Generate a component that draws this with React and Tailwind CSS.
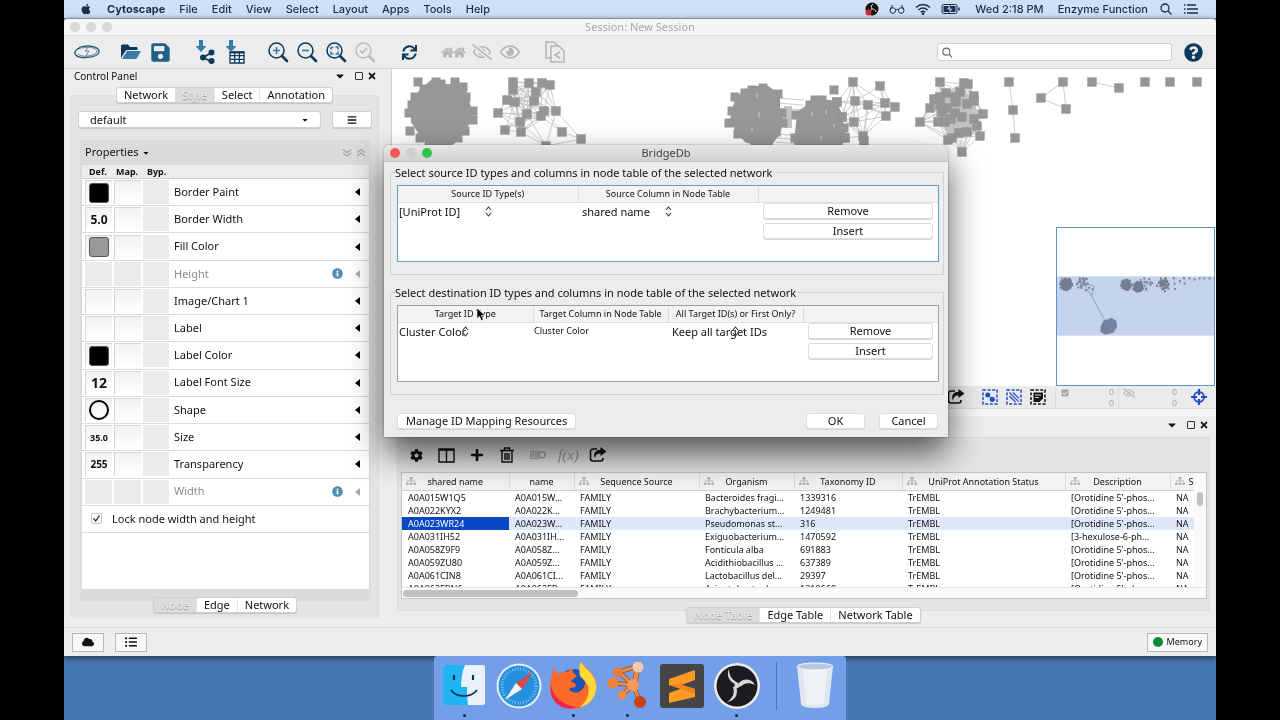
import React from "react";
import {
  FaApple, FaBars, FaCaretDown, FaCheckSquare, FaCloud, FaCog, FaFolderOpen, FaHome, FaInfoCircle, FaListUl,
  FaPlus, FaQuestionCircle, FaRegEye, FaRegEyeSlash, FaSave, FaSitemap, FaSync, FaTimes,
} from "react-icons/fa";

const NAVY = "#0b3a5c";
const BLUE = "#3a7ca5";

/* ---------- network data ---------- */

const blobs = [
  "M422 88 L431 80 L447 84 L461 84 L468 94 L471 108 L471 120 L464 134 L455 143 L446 150 L430 146 L420 136 L411 122 L411 108 L416 94 Z",
  "M737 96 L752 86 L768 86 L780 94 L780 108 L784 120 L780 134 L768 150 L745 142 L735 130 L730 120 L733 106 Z",
  "M797 112 L808 104 L815 98 L836 101 L842 114 L846 138 L838 152 L812 158 L794 144 Z",
];

const denseNodes = [
  [418, 82], [436, 82], [441, 84], [455, 82], [463, 87], [466, 97], [473, 111], [473, 120], [465, 131], [458, 138],
  [429, 142], [420, 138], [410, 131], [409, 113], [412, 105], [415, 97], [424, 89],
  [763, 88], [752, 90], [745, 93], [778, 94], [735, 97], [739, 102], [732, 111], [729, 123], [738, 134], [750, 138],
  [755, 141], [768, 141], [783, 123], [782, 113], [776, 132],
  [834, 90], [815, 100], [822, 100], [837, 102], [796, 115], [795, 138], [845, 138], [842, 117], [810, 105], [844, 128],
  [838, 142], [808, 140], [828, 141], [804, 116], [812, 128],
];

const webA = [
  [513, 82], [513, 90], [529, 83], [542, 83], [550, 85], [536, 92], [534, 101], [507, 100], [515, 102], [498, 113],
  [527, 114], [544, 111], [556, 111], [541, 116], [520, 122], [505, 130], [521, 132], [562, 132], [581, 139], [546, 146],
];
const webB = [
  [853, 82], [880, 86], [855, 101], [868, 105], [885, 103], [895, 107], [886, 116], [854, 122], [863, 136], [864, 141],
  [842, 117], [845, 138], [837, 102],
];
const webC = [
  [940, 82], [964, 83], [968, 84], [946, 93], [940, 97], [934, 99], [930, 108], [960, 92], [974, 96], [967, 104],
  [956, 102], [962, 117], [938, 122], [945, 122], [947, 108], [983, 114], [974, 119], [977, 126], [920, 122], [948, 140],
  [952, 138], [959, 133], [967, 132], [980, 136], [962, 152], [955, 113], [942, 112], [951, 119], [940, 105], [955, 97], [974, 101],
];
const small = [
  [1009, 82], [1013, 110], [1015, 138], [1063, 82], [1041, 98], [1066, 109], [1092, 82], [1119, 88], [1145, 82], [1170, 82], [1197, 82],
];
const smallEdges = [[0, 1], [1, 2], [3, 4], [4, 5], [3, 5], [6, 7]];

const edgesWithin = (nodes, reach) => {
  const out = [];
  nodes.forEach((a, i) => {
    nodes.slice(i + 1).forEach((b, j) => {
      const d = Math.hypot(a[0] - b[0], a[1] - b[1]);
      if (d < reach && (i * 7 + j * 5) % 4 !== 0) out.push([a, b]);
    });
  });
  return out;
};

const allEdges = [
  ...edgesWithin(webA, 44),
  ...edgesWithin(webB, 42),
  ...edgesWithin(webC, 36),
  ...smallEdges.map(([a, b]) => [small[a], small[b]]),
  ...[98, 103, 108, 134, 138, 142].map((y) => [[776, y], [804, y + 2]]),
];
const allNodes = [...webA, ...webB, ...webC, ...small];

const Network = () => (
  <g>
    <path d="M784 106 h8 v22 h-8z M936 96 l28 -8 l16 26 l-6 20 l-20 4 l-18 -18z" fill="#c4c4c4" />
    <g stroke="#c2c2c2" strokeWidth="0.8">
      {allEdges.map(([a, b], i) => (
        <line key={i} x1={a[0]} y1={a[1]} x2={b[0]} y2={b[1]} />
      ))}
    </g>
    <g fill="#979797">
      {blobs.map((d) => (
        <path key={d} d={d} />
      ))}
      {denseNodes.map(([x, y], i) => (
        <rect key={i} x={x - 4.5} y={y - 4.5} width="9" height="9" />
      ))}
    </g>
    <path d="M757 93v5 M759 112v5 M752 128v4 M812 112v4 M826 110v4 M821 136v4 M834 124v3" stroke="#bdbdbd" strokeWidth="1.5" />
    {allNodes.map(([x, y], i) => (
      <rect key={i} x={x - 4.5} y={y - 4.5} width="9" height="9" fill="#969696" stroke="#8c8c8c" strokeWidth="0.3" />
    ))}
  </g>
);

/* ---------- small drawings ---------- */

const Magnifier = ({ children, color = NAVY }) => (
  <svg viewBox="0 0 22 22" className="size-[22px]" fill="none">
    <circle cx="9.500" cy="9.500" r="7.500" stroke={color} strokeWidth="1.500" />
    <path d="M15 15l5 5" stroke={color} strokeWidth="2.600" strokeLinecap="round" />
    <g stroke={color === NAVY ? BLUE : color} strokeWidth="1.600">{children}</g>
  </svg>
);

const ShareBox = ({ className }) => (
  <svg viewBox="0 0 18 16" className={className} fill="none">
    <path d="M8 2H4a2.500 2.500 0 0 0-2.500 2.500v7A2.500 2.500 0 0 0 4 14h7.500a2.500 2.500 0 0 0 2.500-2.500V11" stroke="#111" strokeWidth="1.600" />
    <path d="M11.500 0l6 4.500-6 4.500V6.500C8 6.300 6.500 7.800 6 11.500 3.800 7 6 2.800 11.500 2.700z" fill="#111" />
  </svg>
);

const WindowButtons = () => (
  <div className="flex items-center gap-1">
    <button aria-label="Panel menu" className="mr-1.5"><FaCaretDown className="h-3 w-2.5" /></button>
    <button aria-label="Float" className="size-2 rounded-[1px] border border-[#333]" />
    <button aria-label="Close"><FaTimes className="size-2.5" /></button>
  </div>
);

const Tabs = ({ items, active }) => (
  <div className="flex rounded-[3px] border border-[#cfcfcf] bg-white text-[11px] leading-[14px] shadow-[0_1px_1px_rgba(0,0,0,0.15)]">
    {items.map((item) => (
      <button
        key={item}
        className={
          item === active
            ? "bg-[#dcdcdc] px-[7px] text-[#efefef] [text-shadow:0_1px_1px_#8f8f8f]"
            : "border-l border-[#e6e6e6] px-[7px] first:border-l-0"
        }
      >
        {item}
      </button>
    ))}
  </div>
);

const PushButton = ({ children, className = "" }) => (
  <button className={`rounded-[3px] border border-[#dedede] bg-white text-[11px] leading-[14px] shadow-[0_1px_0_#d6d6d6] ${className}`}>
    {children}
  </button>
);

/* ---------- menu bar ---------- */

const MenuBar = () => (
  <nav className="flex h-[18px] shrink-0 items-center bg-[#d0dff6] pr-[18px] pl-4 font-['Inter',sans-serif] text-[11px] text-[#1c2b4d]">
    <FaApple className="mr-[15px] size-3" />
    <div className="flex gap-[14px] font-medium">
      <button className="font-bold">Cytoscape</button>
      {["File", "Edit", "View", "Select", "Layout", "Apps", "Tools", "Help"].map((m) => (
        <button key={m}>{m}</button>
      ))}
    </div>
    <div className="ml-auto flex items-center gap-2.5 font-medium">
      <svg viewBox="0 0 14 14" className="size-[14px]">
        <circle cx="7" cy="7" r="6.500" fill="#111" />
        <path d="M7 7c-1-2-1-4 1-5M7 7c2 0 4 1 4 3M7 7c-1 2-3 3-5 2" stroke="#ddd" fill="none" />
        <circle cx="3.500" cy="10.500" r="3" fill="#d8262f" />
      </svg>
      <svg viewBox="0 0 16 10" className="h-2.5 w-4" fill="none" stroke="currentColor">
        <circle cx="3.800" cy="6.500" r="2.800" />
        <circle cx="12.200" cy="6.500" r="2.800" />
        <path d="M6.600 6c1-1 2-1 2.800 0M1.200 5.500L3.500 1M14.800 5.500L12.500 1" />
      </svg>
      <svg viewBox="0 0 16 12" className="h-3 w-4" fill="none" stroke="currentColor" strokeWidth="1.300">
        <path d="M1 4.500c4-4 10-4 14 0M3.300 7c3-2.600 6.400-2.600 9.400 0M5.600 9.200c1.600-1.300 3.200-1.300 4.800 0" />
        <circle cx="8" cy="10.800" r="0.600" fill="currentColor" />
      </svg>
      <svg viewBox="0 0 20 10" className="h-2.5 w-5" fill="none">
        <rect x="1" y="0.500" width="15" height="9" rx="1.500" stroke="#1c2b4d" />
        <rect x="2.500" y="2" width="12" height="6" fill="#1c2b4d" />
        <path d="M9.500 0.500L5.500 5.500h3L7.500 9.500l4.500-5h-3z" fill="#d0dff6" stroke="#1c2b4d" strokeWidth="0.500" />
        <path d="M18 3.500v3" stroke="#1c2b4d" strokeWidth="1.500" />
      </svg>
      <span className="ml-1">Wed 2:18 PM</span>
      <button className="ml-1">Enzyme Function</button>
      <svg viewBox="0 0 12 12" className="ml-0.5 size-3" fill="none" stroke="currentColor" strokeWidth="1.300">
        <circle cx="5" cy="5" r="4" />
        <path d="M8 8l3.500 3.500" />
      </svg>
      <svg viewBox="0 0 14 10" className="ml-0.5 h-2.5 w-[14px]" stroke="currentColor" strokeWidth="1.500">
        <path d="M0 1h1.500M0 5h1.500M0 9h1.500M3 1h9M3 5h11M3 9h11" />
      </svg>
    </div>
  </nav>
);

/* ---------- main toolbar ---------- */

const Toolbar = () => (
  <div className="flex h-[33px] shrink-0 items-center border-b border-[#d4d4d4] bg-[#ececec] pr-[13px] pl-[9px]">
    <button aria-label="Cytoscape home">
      <svg viewBox="0 0 28 18" className="h-[18px] w-7" fill="none" stroke="#1f5673">
        <path d="M6 4.500C16 1 27 4 26 9c-1 6-22 8-24 1.500C1.500 8 4 5.500 8 4.500" strokeWidth="1.300" />
        <path d="M9 5c8-2 15 0 15 4-1 4-16 6-19 2" strokeWidth="0.700" />
        <path d="M17 2l-5 6h4l-5 8" stroke="#4d88a8" />
      </svg>
    </button>
    <button aria-label="Open" className="ml-5">
      <svg viewBox="0 0 20 16" className="h-4 w-5">
        <path d="M0 2q0-1.500 1.500-1.500H7l2 2.500h6.500q1 0 1 1V6H6.500q-1.500 0-2.200 1.200L0 14z" fill={NAVY} />
        <path d="M6 7h14l-4 7q-.6 1-1.800 1H1z" fill={BLUE} />
      </svg>
    </button>
    <button aria-label="Save" className="ml-[9px]"><FaSave className="size-[21px]" color="#1f5f88" /></button>
    <button aria-label="Import network" className="ml-6">
      <svg viewBox="0 0 20 24" className="h-6 w-5">
        <path d="M4 0h4v6h3.500L6 12 0.500 6H4z" fill={BLUE} />
        <path d="M17 12.500L8 17.500l9 4.500" stroke={NAVY} strokeWidth="1.800" fill="none" />
        <circle cx="16.500" cy="12.500" r="3" fill={NAVY} />
        <circle cx="8" cy="17.500" r="3" fill={NAVY} />
        <circle cx="16.500" cy="21" r="3" fill={NAVY} />
      </svg>
    </button>
    <button aria-label="Import table" className="ml-2.5">
      <svg viewBox="0 0 20 24" className="h-6 w-5">
        <path d="M5 12h14v11H5zM5 15.700h14M5 19.300h14M9.700 12v11M14.300 12v11" stroke={NAVY} strokeWidth="1.300" fill="#fff" />
        <path d="M5 12.500h14" stroke={NAVY} strokeWidth="2" />
        <path d="M4 0h4v6h3.500L6 12 0.500 6H4z" fill={BLUE} />
      </svg>
    </button>
    <div className="ml-[22px] flex gap-[7px]">
      <button aria-label="Zoom in"><Magnifier><path d="M9.500 6v7M6 9.500h7" /></Magnifier></button>
      <button aria-label="Zoom out"><Magnifier><path d="M6 9.500h7" /></Magnifier></button>
      <button aria-label="Fit content"><Magnifier><path d="M6 8.500V6.500h2.500M10.500 6h2.500v2.500M6 10.500V13h2.500M10.500 13H13v-2.500" /></Magnifier></button>
      <button aria-label="Fit selected"><Magnifier color="#bcbcbc"><path d="M6 9.500l2.500 2.500 4.500-5" /></Magnifier></button>
    </div>
    <button aria-label="Refresh" className="ml-[26px]"><FaSync className="size-[15px]" color={NAVY} /></button>
    <div className="ml-6 flex items-center text-[#b5b5b5]">
      <button aria-label="First neighbors" className="flex -space-x-px"><FaHome className="size-[13px]" /><FaHome className="size-[13px]" /></button>
      <button aria-label="Hide" className="ml-1.5"><FaRegEyeSlash className="size-5" /></button>
      <button aria-label="Show" className="ml-2"><FaRegEye className="size-5" /></button>
      <button aria-label="New network from selection" className="ml-[25px]">
        <svg viewBox="0 0 20 22" className="h-[22px] w-5" fill="#ececec" stroke="#b5b5b5" strokeWidth="1.500">
          <path d="M1 1h8l4 4v12H1z" />
          <path d="M6 5h8l5 5v11H6z" />
          <path d="M15 11l-5 3 5 3" fill="none" />
        </svg>
      </button>
    </div>
    <div className="ml-auto flex h-[18px] w-[235px] items-center rounded-[3px] border border-[#cfcfcf] bg-white px-1">
      <svg viewBox="0 0 12 12" className="size-[11px]" fill="none" stroke="#666" strokeWidth="1.200">
        <circle cx="5" cy="5" r="4" />
        <path d="M8 8l3.500 3.500" />
      </svg>
      <input aria-label="Search" className="w-full px-1 text-[11px] outline-none" />
    </div>
    <button aria-label="Help" className="ml-3"><FaQuestionCircle className="size-[19px]" color={NAVY} /></button>
  </div>
);

/* ---------- control panel ---------- */

const properties = [
  { name: "Border Paint", swatch: "bg-black" },
  { name: "Border Width", value: "5.0", size: "text-xs" },
  { name: "Fill Color", swatch: "bg-[#999]" },
  { name: "Height", locked: true },
  { name: "Image/Chart 1" },
  { name: "Label" },
  { name: "Label Color", swatch: "bg-black" },
  { name: "Label Font Size", value: "12", size: "text-sm" },
  { name: "Shape", round: true },
  { name: "Size", value: "35.0", size: "text-[9px]" },
  { name: "Transparency", value: "255", size: "text-[10px]" },
  { name: "Width", locked: true },
];

const PropertyRow = ({ name, swatch, value, size, round, locked }) => {
  const cell = locked ? "bg-[#ebebeb]" : "border-t border-l border-[#d6d6d6] bg-linear-to-b from-[#f2f2f2] to-white";
  return (
    <div className="flex items-center border-b border-[#dcdcdc] bg-white pr-[9px] pl-[3px]">
      <button aria-label={`${name} default`} className={`flex h-6 w-[27px] items-center justify-center ${cell}`}>
        {swatch && <span className={`size-5 rounded-[3px] border border-[#555] ${swatch}`} />}
        {value && <span className={`font-bold ${size}`}>{value}</span>}
        {round && <span className="size-5 rounded-full border-2 border-black" />}
      </button>
      <button aria-label={`${name} mapping`} className={`ml-0.5 h-6 w-[27px] ${cell}`} />
      <button aria-label={`${name} bypass`} className="ml-0.5 h-6 w-[26px] bg-[#ebebeb]" />
      <span className={`ml-[5px] ${locked ? "text-[#8c8c8c]" : ""}`}>{name}</span>
      {locked && <FaInfoCircle className="mr-3 ml-auto size-[11px]" color="#4f8fb4" />}
      <button aria-label={`Expand ${name}`} className={locked ? "" : "ml-auto"}>
        <svg viewBox="0 0 5 8" className="h-2 w-[5px]" fill={locked ? "#aaa" : "#000"}>
          <path d="M5 0v8L0 4z" />
        </svg>
      </button>
    </div>
  );
};

const ControlPanel = () => (
  <aside className="flex w-[327px] shrink-0 flex-col bg-[#ededed] pr-3 pb-[9px] pl-1.5 text-[11px]">
    <div className="flex h-[14px] items-center justify-between pr-0.5 pl-1">
      <h2 className="text-[10px]">Control Panel</h2>
      <WindowButtons />
    </div>
    <div className="relative z-10 mt-1 flex justify-center">
      <Tabs items={["Network", "Style", "Select", "Annotation"]} active="Style" />
    </div>
    <div className="-mt-2 flex flex-1 flex-col rounded-[3px] border border-[#dfdfdf] bg-[#e4e4e4] pt-[15px] pr-1.5 pb-1 pl-[7px]">
      <div className="flex items-center gap-[11px]">
        <div className="relative flex flex-1 items-center">
          <select aria-label="Current style" className="h-[17px] w-full appearance-none rounded-[3px] border border-[#cfcfcf] bg-white pl-[11px] text-[11px] leading-[14px] shadow-[0_1px_0_#c8c8c8]">
            <option>default</option>
          </select>
          <FaCaretDown className="pointer-events-none absolute right-3 size-2" />
        </div>
        <button aria-label="Style options" className="flex h-[17px] w-10 items-center justify-center rounded-[3px] border border-[#cfcfcf] bg-white shadow-[0_1px_0_#c8c8c8]">
          <FaBars className="size-2.5" />
        </button>
      </div>
      <div className="mr-px ml-0.5 mt-3 flex flex-1 flex-col bg-[#dbdbdb] px-0.5 pb-3">
        <div className="flex h-[25px] items-center px-[3px]">
          <button className="flex items-center gap-1">Properties <FaCaretDown className="size-2" /></button>
          <svg viewBox="0 0 24 8" className="ml-auto h-2 w-6" fill="none" stroke="#a5a5a5" strokeWidth="1.200">
            <path d="M1 0.500l4 3 4-3M1 4l4 3 4-3M15 3.500l4-3 4 3M15 7l4-3 4 3" />
          </svg>
        </div>
        <div className="flex flex-1 flex-col bg-white">
          <div className="flex h-[14px] items-center border-b border-[#cfcfcf] bg-[#ececec] pl-[7px] text-[9px] font-bold">
            <span className="w-[27px]">Def.</span>
            <span className="w-[31px]">Map.</span>
            <span>Byp.</span>
          </div>
          <div className="grid h-[354px] grid-rows-[repeat(13,1fr)]">
            {properties.map((p) => (
              <PropertyRow key={p.name} {...p} />
            ))}
            <label className="flex items-center gap-2.5 border-b border-[#dcdcdc] pl-[9px]">
              <span className="relative flex size-[11px]">
                <input type="checkbox" defaultChecked className="size-[11px] appearance-none rounded-xs border border-[#c4c4c4] bg-white" />
                <svg viewBox="0 0 11 11" className="pointer-events-none absolute inset-0" fill="none" stroke="#222" strokeWidth="1.300">
                  <path d="M2.500 5.500l2.200 2.500L8.500 2.500" />
                </svg>
              </span>
              Lock node width and height
            </label>
          </div>
        </div>
      </div>
      <div className="relative z-10 -mt-1 flex justify-center">
        <Tabs items={["Node", "Edge", "Network"]} active="Node" />
      </div>
    </div>
  </aside>
);

/* ---------- network view ---------- */

const NetworkView = () => (
  <section className="relative min-h-0 flex-1 overflow-hidden border-l border-[#d0d0d0] bg-white">
    <svg viewBox="392 69 824 317" className="h-[317px] w-[824px] max-w-none">
      <Network />
    </svg>
    <svg viewBox="1056 228 159 159" className="absolute right-px bottom-0 size-[159px] border border-[#5f93cc] bg-white">
      <rect x="1056" y="277" width="159" height="60" fill="#c4d2ee" />
      <g className="mix-blend-multiply">
        <g transform="translate(980.600 263.300) scale(0.192)">
          <Network />
        </g>
      </g>
      <path d="M1083 284l8 13 3-10zM1091 297l16 29" stroke="#8592ab" strokeWidth="0.800" fill="none" />
      <path d="M1100 328l3-6 6-2 2-1 5 3 1 6-4 6-8 2-5-3z" fill="#75829f" />
    </svg>
  </section>
);

const Counter = () => (
  <div className="leading-[11px]">
    <p>0</p>
    <p>0</p>
  </div>
);

const ViewToolbar = () => (
  <div className="flex h-[23px] shrink-0 items-center justify-end border-b border-[#dadada] bg-[#ebebeb] pr-[9px] font-['Liberation_Sans',sans-serif] text-[9px] text-[#a5a5a5]">
    <button aria-label="Export view" className="mr-[17px]"><ShareBox className="h-4 w-[18px]" /></button>
    <div className="flex gap-2 pr-[9px]">
      <button aria-label="Select nodes">
        <svg viewBox="0 0 16 16" className="size-4" fill="#1f4fc4">
          <rect x="1" y="1" width="14" height="14" fill="none" stroke="#1f4fc4" strokeWidth="1.500" strokeDasharray="3 1.600" />
          <circle cx="5.800" cy="6" r="2.500" />
          <circle cx="10.300" cy="10.300" r="2.600" />
          <path d="M5 5l6 6" stroke="#1f4fc4" />
        </svg>
      </button>
      <button aria-label="Select edges">
        <svg viewBox="0 0 16 16" className="size-4" fill="none" stroke="#1f4fc4" strokeWidth="1.500">
          <rect x="1" y="1" width="14" height="14" strokeDasharray="3 1.600" />
          <path d="M3.500 7l6 6M3.500 3.500l9 9M7 3.500l6 6" strokeWidth="1.200" />
        </svg>
      </button>
      <button aria-label="Select annotations">
        <svg viewBox="0 0 16 16" className="size-4" fill="none" stroke="#111" strokeWidth="1.500">
          <rect x="1" y="1" width="14" height="14" strokeDasharray="3 1.600" />
          <path d="M3.500 3.500h9.500v6L9.500 13h-6z" fill="#111" stroke="none" />
          <path d="M5 6h6M5 8.500h4" stroke="#ebebeb" strokeWidth="0.900" />
        </svg>
      </button>
    </div>
    <div className="flex h-full w-[63px] justify-between border-l border-[#dcdcdc] pt-px pr-1 pl-[5px]">
      <FaCheckSquare className="mt-0.5 size-2" />
      <Counter />
    </div>
    <div className="flex h-full w-[63px] justify-between border-l border-[#dcdcdc] pt-px pr-1 pl-1">
      <FaRegEyeSlash className="size-3" />
      <Counter />
    </div>
    <button aria-label="Center view" className="ml-2.5">
      <svg viewBox="0 0 16 16" className="size-4" fill="none" stroke="#1f4fc4">
        <circle cx="8" cy="8" r="5" strokeWidth="1.800" />
        <path d="M8 0v6M8 10v6M0 8h6M10 8h6" strokeWidth="2.200" />
      </svg>
    </button>
  </div>
);

/* ---------- table panel ---------- */

const columns = [
  { title: "shared name", width: "w-[107px]", icon: true },
  { title: "name", width: "w-[65px]" },
  { title: "Sequence Source", width: "w-[125px]", icon: true },
  { title: "Organism", width: "w-[95px]", icon: true },
  { title: "Taxonomy ID", width: "w-[108px]", icon: true },
  { title: "UniProt Annotation Status", width: "w-[163px]", icon: true },
  { title: "Description", width: "w-[105px]", icon: true },
  { title: "S", width: "w-6", icon: true },
];

const rows = [
  ["A0A015W1Q5", "A0A015W...", "Bacteroides fragi...", "1339316", "[Orotidine 5'-phos..."],
  ["A0A022KYX2", "A0A022K...", "Brachybacterium...", "1249481", "[Orotidine 5'-phos..."],
  ["A0A023WR24", "A0A023W...", "Pseudomonas st...", "316", "[Orotidine 5'-phos..."],
  ["A0A031IH52", "A0A031IH...", "Exiguobacterium...", "1470592", "[3-hexulose-6-ph..."],
  ["A0A058Z9F9", "A0A058Z...", "Fonticula alba", "691883", "[Orotidine 5'-phos..."],
  ["A0A059ZU80", "A0A059Z...", "Acidithiobacillus ...", "637389", "[Orotidine 5'-phos..."],
  ["A0A061CIN8", "A0A061CI...", "Lactobacillus del...", "29397", "[Orotidine 5'-phos..."],
  ["A0A062FBN6", "A0A062FB...", "Acinetobacter ba...", "1310668", "[Orotidine 5'-phos..."],
];

const TablePanel = () => (
  <section className="shrink-0 bg-[#ededed] px-1.5 pb-1 text-[9px]">
    <div className="flex h-[22px] items-center justify-end border-b border-[#dcdcdc] pr-px pb-1">
      <WindowButtons />
    </div>
    <div className="border-x border-b border-[#dedede] bg-[#e4e4e4] pr-0.5 pb-[11px] pl-[3px]">
      <div className="flex h-[34px] items-center pl-[9px]">
        <button aria-label="Table settings"><FaCog className="size-[13px]" /></button>
        <button aria-label="Show columns" className="ml-[15px]">
          <svg viewBox="0 0 17 15" className="h-[15px] w-[17px]" fill="none" stroke="#111" strokeWidth="1.400">
            <path d="M1 1h15v13H1zM8.500 1v13M1 2h15" />
          </svg>
        </button>
        <button aria-label="Add column" className="ml-[15px]"><FaPlus className="size-[14px]" /></button>
        <button aria-label="Delete column" className="ml-4">
          <svg viewBox="0 0 14 16" className="h-4 w-[14px]" fill="none" stroke="#111" strokeWidth="1.400">
            <path d="M0 3.500h14M4.500 3V1h5v2M2 4v11h10V4M5 6v7M7 6v7M9 6v7" />
          </svg>
        </button>
        <button aria-label="Map table" className="ml-4">
          <svg viewBox="0 0 16 10" className="h-2.5 w-4" fill="none" stroke="#aaa">
            <path d="M0.500 1.500h8v7h-8zM0.500 4h8M0.500 6h8M3 1.500v7M6 1.500v7" />
            <circle cx="12" cy="5" r="3" strokeWidth="1.500" />
          </svg>
        </button>
        <button className="ml-3 font-['Liberation_Serif',serif] text-[15px] text-[#999] italic">f(x)</button>
        <button aria-label="Export table" className="ml-2.5"><ShareBox className="h-4 w-[18px]" /></button>
      </div>
      <div className="border border-[#c4c4c4] bg-white">
        <div className="flex h-[114px]">
          <div className="flex-1 overflow-hidden">
            <table className="w-full table-fixed border-collapse leading-[13px] whitespace-nowrap">
              <thead>
                <tr className="h-[17px] border-b border-[#d0d0d0] bg-[#f3f3f3]">
                  {columns.map((c) => (
                    <th key={c.title} className={`border-r border-[#dcdcdc] p-0 font-normal last:border-r-0 ${c.width}`}>
                      <div className="flex items-center overflow-hidden px-1">
                        {c.icon && <FaSitemap className="mr-1 size-2.5 shrink-0" color="#b0b0b0" />}
                        <span className={c.icon ? "flex-1 pr-3.5 text-center" : "flex-1 text-center"}>{c.title}</span>
                      </div>
                    </th>
                  ))}
                </tr>
              </thead>
              <tbody>
                {rows.map(([id, name, organism, tax, desc]) => {
                  const picked = id === "A0A023WR24";
                  return (
                    <tr key={id} className={`h-[13px] *:overflow-hidden *:p-0 *:pl-1.5 ${picked ? "bg-[#dfe7f9]" : ""}`}>
                      <td className={picked ? "bg-[#0a47c4] text-white" : ""}>{id}</td>
                      <td>{name}</td>
                      <td>FAMILY</td>
                      <td>{organism}</td>
                      <td>{tax}</td>
                      <td>TrEMBL</td>
                      <td>{desc}</td>
                      <td>NA</td>
                    </tr>
                  );
                })}
              </tbody>
            </table>
          </div>
          <div className="w-3 bg-[#fafafa] px-[3px] pt-[19px]">
            <div className="h-[14px] rounded-full bg-[#c1c1c1]" />
          </div>
        </div>
        <div className="flex h-[11px] items-center border-t border-[#e2e2e2] bg-[#fafafa] pl-px">
          <div className="h-[7px] w-[175px] rounded-full bg-[#c1c1c1]" />
        </div>
      </div>
    </div>
    <div className="relative z-10 -mt-1 flex justify-center">
      <Tabs items={["Node Table", "Edge Table", "Network Table"]} active="Node Table" />
    </div>
  </section>
);

/* ---------- BridgeDb dialog ---------- */

const UpDown = ({ className }) => (
  <svg viewBox="0 0 7 11" className={`pointer-events-none absolute h-[11px] w-[7px] ${className}`} fill="none" stroke="#333" strokeWidth="1.100">
    <path d="M1 4l2.500-3L6 4M1 7l2.500 3L6 7" />
  </svg>
);

const Picker = ({ label, value, width, arrow }) => (
  <div className={`relative flex items-center ${width}`}>
    <select aria-label={label} className="w-full appearance-none bg-transparent text-[11px]">
      <option>{value}</option>
    </select>
    <UpDown className={arrow} />
  </div>
);

const headCell = "border-r border-[#dcdcdc] p-0 font-normal last:border-r-0";

const RowButtons = () => (
  <div className="flex flex-col gap-1 px-[5px]">
    <PushButton>Remove</PushButton>
    <PushButton>Insert</PushButton>
  </div>
);

const BridgeDialog = () => (
  <div
    role="dialog"
    aria-label="BridgeDb"
    className="absolute top-[145px] left-80 z-20 w-[564px] rounded-t-[5px] bg-[#ececec] text-[11px] shadow-[0_16px_34px_rgba(0,0,0,0.65),0_0_2px_rgba(0,0,0,0.4)]"
  >
    <div className="flex h-[17px] items-center rounded-t-[5px] border-b border-[#c8c8c8] bg-linear-to-b from-[#e6e6e6] to-[#d2d2d2] px-1.5 text-[#444]">
      <div className="flex w-14 gap-1.5">
        <button aria-label="Close dialog" className="size-2.5 rounded-full bg-[#f25a57]" />
        <button aria-label="Minimize dialog" className="size-2.5 rounded-full bg-[#cfcfcf]" />
        <button aria-label="Zoom dialog" className="size-2.5 rounded-full bg-[#34c24a]" />
      </div>
      <h1 className="flex-1 pr-14 text-center">BridgeDb</h1>
    </div>
    <fieldset className="mx-1 mt-[3px] ml-1.5 border border-[#d4d4d4] px-1 pb-3">
      <legend className="pr-0.5 leading-[15px]">Select source ID types and columns in node table of the selected network</legend>
      <div className="ml-0.5 mt-[5px] h-[77px] border border-[#5b9fd0] bg-white">
        <table className="w-full table-fixed border-collapse">
          <thead>
            <tr className="h-4 border-b border-[#e0e0e0] bg-[#f3f3f3] text-[9px]">
              <th className={headCell}>Source ID Type(s)</th>
              <th className={headCell}>Source Column in Node Table</th>
              <th className={headCell} />
            </tr>
          </thead>
          <tbody>
            <tr className="align-top">
              <td className="p-0 pt-px pl-px"><Picker label="Source ID type" value="[UniProt ID]" width="w-[93px]" arrow="right-0" /></td>
              <td className="p-0 pt-px pl-1"><Picker label="Source column" value="shared name" width="w-[90px]" arrow="right-0" /></td>
              <td className="p-0"><RowButtons /></td>
            </tr>
          </tbody>
        </table>
      </div>
    </fieldset>
    <fieldset className="mx-1 mt-2.5 ml-1.5 border border-[#d4d4d4] px-1 pb-3">
      <legend className="pr-0.5 leading-[15px]">Select destination ID types and columns in node table of the selected network</legend>
      <div className="ml-0.5 mt-[5px] h-[77px] border border-[#a0a0a0] bg-white">
        <table className="w-full table-fixed border-collapse">
          <thead>
            <tr className="h-4 border-b border-[#e0e0e0] bg-[#f3f3f3] text-[9px]">
              <th className={headCell}>Target ID Type</th>
              <th className={headCell}>Target Column in Node Table</th>
              <th className={headCell}>All Target ID(s) or First Only?</th>
              <th className={headCell} />
            </tr>
          </thead>
          <tbody>
            <tr className="align-top">
              <td className="p-0 pt-px pl-px"><Picker label="Target ID type" value="Cluster Color" width="w-[74px]" arrow="right-1" /></td>
              <td className="p-0 pt-px pl-px text-[9px]">Cluster Color</td>
              <td className="p-0 pt-px pl-1"><Picker label="Keep rule" value="Keep all target IDs" width="w-[120px]" arrow="left-[60px]" /></td>
              <td className="p-0"><RowButtons /></td>
            </tr>
          </tbody>
        </table>
      </div>
    </fieldset>
    <div className="flex pt-[18px] pr-2.5 pb-2 pl-[13px]">
      <PushButton className="px-2">Manage ID Mapping Resources</PushButton>
      <PushButton className="mr-[14px] ml-auto w-[59px]">OK</PushButton>
      <PushButton className="w-[59px]">Cancel</PushButton>
    </div>
    <svg viewBox="0 0 10 15" className="pointer-events-none absolute top-[162px] left-[92px] h-[15px] w-2.5">
      <path d="M1 1v10.500l2.500-2.300 1.800 4.300 2-.8-1.800-4.200H9z" fill="#000" stroke="#fff" strokeWidth="0.600" />
    </svg>
  </div>
);

/* ---------- dock ---------- */

const dockApps = [
  {
    name: "Finder",
    running: true,
    art: (
      <>
        <rect x="3" y="3" width="42" height="40" rx="2" fill="#eaf1f8" />
        <path d="M3 5q0-2 2-2h20c-3 7-4 15-4 22h6c0 6 0 12 1 18H5q-2 0-2-2z" fill="#1fb4f4" />
        <path d="M14 13v5M33 13v5" stroke="#12304f" strokeWidth="2.200" />
        <path d="M11 28c6 8 20 8 26 0" stroke="#12304f" strokeWidth="1.600" fill="none" />
      </>
    ),
  },
  {
    name: "Safari",
    art: (
      <>
        <circle cx="24" cy="24" r="22.500" fill="#e9eef4" />
        <circle cx="24" cy="24" r="20.500" fill="#2590de" />
        <circle cx="24" cy="24" r="17" fill="none" stroke="#9fd3f4" strokeWidth="3" strokeDasharray="0.700 2" />
        <path d="M38 10L21 21l6 6z" fill="#e5433c" />
        <path d="M10 38l17-11-6-6z" fill="#f2f2f2" />
      </>
    ),
  },
  {
    name: "Firefox",
    running: true,
    art: (
      <>
        <circle cx="25" cy="24" r="17" fill="#1d54b8" />
        <path d="M5 6c1 3 3 5 5 6 3-2 6-3 9-2 2-3 3-3 5-4-1 4 1 6 4 8-2 2-5 3-6 6 4 0 6 3 4 5-2 1-5 0-6 2 4 6 12 4 15-2 3-6 0-12-4-15-2-4 0-7 1-10 3 4 7 6 9 9 6 7 8 14 5 22-4 10-13 16-22 16C11 47 1 38 1 26c0-8 2-14 4-20z" fill="#fb6a26" />
        <path d="M32 0c2 4 6 7 9 10 6 7 8 15 5 22-3 8-9 12-15 13 7-6 10-13 8-21-2-4-5-7-8-10-1-6-1-10 1-14z" fill="#ffd93b" />
        <path d="M2 23c2 12 11 20 26 22-14 6-29-6-26-22z" fill="#e8264f" />
      </>
    ),
  },
  {
    name: "Cytoscape",
    running: true,
    art: (
      <g transform="translate(3 -2)">
        <path d="M31 6L12 12M31 6l-5 19L6 23M12 12l14 13M26 25l-11 10M26 25l7 17M31 6l-3 20" stroke="#8c4a20" strokeWidth="4.500" fill="none" />
        <path d="M31 6L12 12M31 6l-5 19L6 23M12 12l14 13M26 25l-11 10M26 25l7 17M31 6l-3 20" stroke="#ed8a45" strokeWidth="3.200" fill="none" />
        <circle cx="31" cy="7" r="5.500" fill="#f9c6ae" />
        <circle cx="11" cy="12" r="5" fill="#ee7b35" />
        <circle cx="6" cy="23" r="5.500" fill="#f0823a" />
        <circle cx="26" cy="25" r="6" fill="#f59a58" />
        <circle cx="15" cy="35" r="4.500" fill="#f08c48" />
        <circle cx="33" cy="42" r="6" fill="#c8421c" />
      </g>
    ),
  },
  {
    name: "Sublime Text",
    art: (
      <>
        <rect x="2" y="2" width="44" height="44" rx="3" fill="#454545" />
        <path d="M11 17L37 8v10l-14 5 14 4v8L11 41V31l14-5-14-3z" fill="#ff9a26" />
        <path d="M22 22l15 5v5L11 23z" fill="#f08518" />
      </>
    ),
  },
  {
    name: "OBS",
    running: true,
    art: (
      <>
        <circle cx="24" cy="24" r="23" fill="#ececec" />
        <circle cx="24" cy="24" r="20.500" fill="#1c1b1f" />
        <path d="M24 23C16 20 13 13 16 7c0 7 3 11 9 14zM25 22c5-6 13-6 17 1-6-3-11-2-15 2zM23 24c3 8-1 15-9 16 6-4 8-9 6-15z" fill="#d9d9d9" />
        <circle cx="24" cy="23.500" r="2.500" fill="#d9d9d9" />
      </>
    ),
  },
];

const Dock = () => (
  <footer className="flex h-16 shrink-0 justify-center">
    <div className="flex w-[412px] rounded-t-[3px] bg-[#739fe8] px-[3px] pt-1.5">
      <div className="grid w-[327px] grid-cols-6">
        {dockApps.map(({ name, running, art }) => (
          <button key={name} aria-label={name} className="flex flex-col items-center">
            <svg viewBox="0 0 48 48" className="size-12">{art}</svg>
            {running && <span className="mt-1 size-[3px] rounded-full bg-[#0e2450]" />}
          </button>
        ))}
      </div>
      <div className="ml-3 h-12 border-l border-[#4f74b4]" />
      <button aria-label="Trash" className="ml-[18px] self-start">
        <svg viewBox="0 0 40 48" className="h-12 w-10">
          <path d="M2 4h36l-4 38q-1 4-14 4T6 42z" fill="#dfe6ef" />
          <path d="M8 8h24l-3 34q-9 2-18 0z" fill="#eef1f6" />
          <ellipse cx="20" cy="4.500" rx="18" ry="3.500" fill="#b9c8e0" stroke="#f4f6fa" />
        </svg>
      </button>
    </div>
  </footer>
);

/* ---------- page ---------- */

export default function App() {
  return (
    <div className="flex min-h-screen bg-black px-16 font-['Noto_Sans','DejaVu_Sans',sans-serif] text-[#111]">
      <div className="relative flex flex-1 flex-col overflow-hidden bg-[#4878b4]">
        <MenuBar />
        <main className="flex flex-1 flex-col rounded-t-[4px] bg-[#ededed] shadow-[0_2px_6px_rgba(0,0,0,0.6)]">
          <div className="flex h-[18px] shrink-0 items-center rounded-t-[4px] border-t border-b border-[#dcdcdc] border-t-[#7d8fae] bg-[#f5f5f5] px-1.5">
            <div className="flex w-14 gap-1.5">
              <span className="size-2.5 rounded-full bg-[#dadada]" />
              <span className="size-2.5 rounded-full bg-[#dadada]" />
              <span className="size-2.5 rounded-full bg-[#dadada]" />
            </div>
            <p className="flex-1 pr-14 text-center text-[11px] leading-4 text-[#a8a8a8]">Session: New Session</p>
          </div>
          <Toolbar />
          <div className="flex flex-1">
            <ControlPanel />
            <div className="flex min-w-0 flex-1 flex-col">
              <NetworkView />
              <ViewToolbar />
              <div className="h-[7px] bg-[#f6f6f6]" />
              <TablePanel />
            </div>
          </div>
          <div className="flex h-[29px] shrink-0 items-center gap-[11px] border-t border-[#dadada] px-2 text-[9px]">
            <button aria-label="Cloud" className="flex h-[19px] w-8 items-center justify-center border border-[#b8b8b8] bg-[#f8f8f8]"><FaCloud className="size-3" /></button>
            <button aria-label="Task list" className="flex h-[19px] w-8 items-center justify-center border border-[#b8b8b8] bg-[#f8f8f8]"><FaListUl className="size-3" /></button>
            <button className="ml-auto flex h-[19px] items-center gap-1 border border-[#b8b8b8] bg-[#f8f8f8] px-[5px]">
              <span className="size-2.5 rounded-full bg-[#0f8a35]" />
              Memory
            </button>
          </div>
        </main>
        <Dock />
        <BridgeDialog />
      </div>
    </div>
  );
}
